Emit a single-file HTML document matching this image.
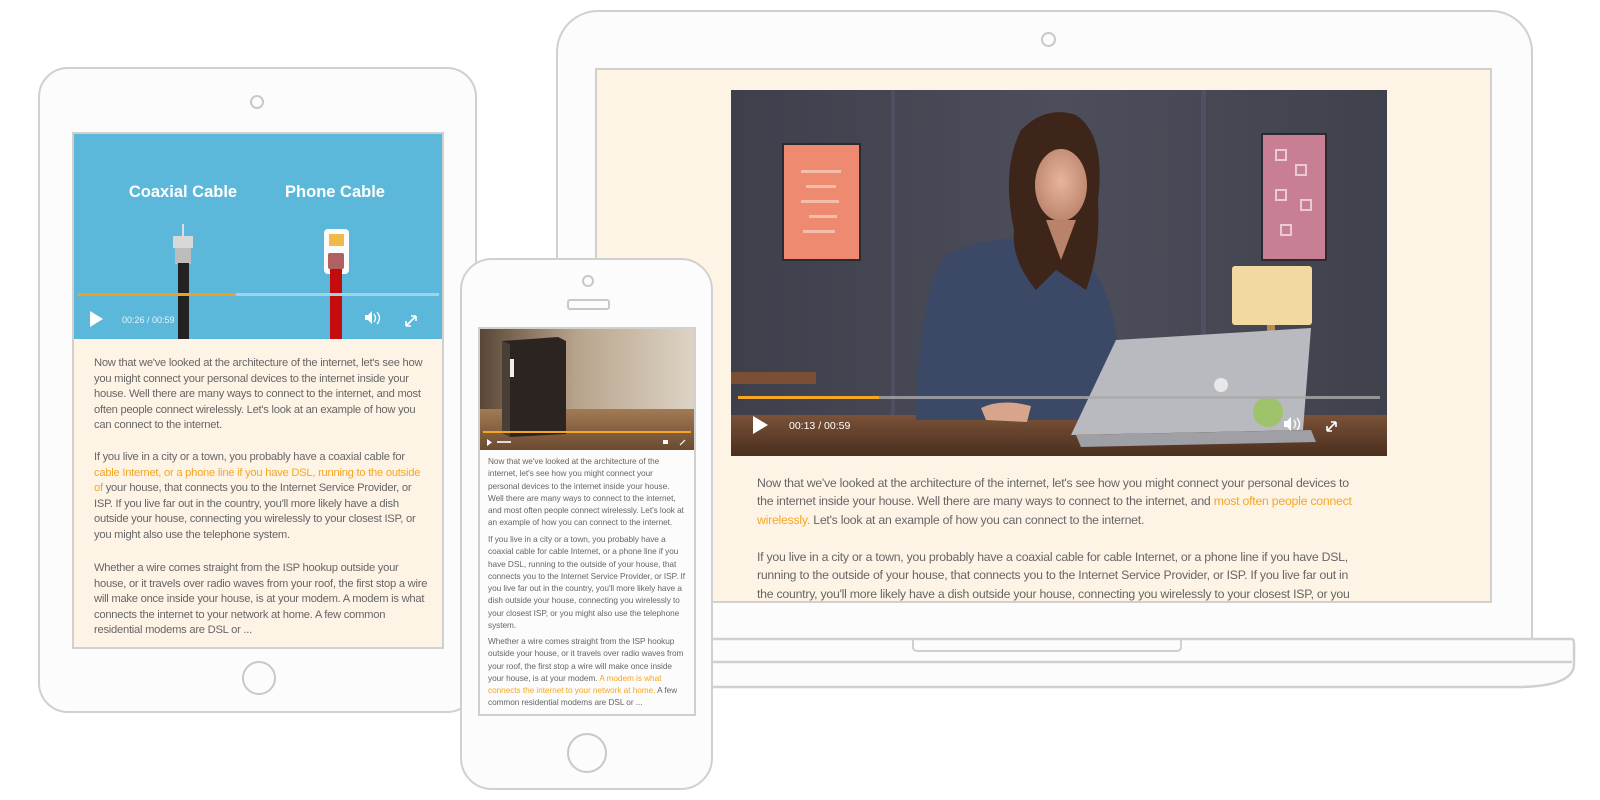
<!DOCTYPE html>
<html><head><meta charset="utf-8"><style>
*{margin:0;padding:0;box-sizing:border-box}
body{width:1600px;height:800px;background:#fff;position:relative;overflow:hidden;font-family:"Liberation Sans",Arial,sans-serif}
.a{position:absolute}
.t{position:absolute;white-space:nowrap;color:#666}
.o{color:#f5a623}
</style></head><body>

<!-- LAPTOP -->
<div class="a" style="left:556px;top:10px;width:977px;height:640px;border:2px solid #d0d0d0;border-bottom:none;border-radius:42px 42px 0 0;background:#fcfcfc"></div>
<div class="a" style="left:1041px;top:32px;width:15px;height:15px;border:2px solid #c8c8c8;border-radius:50%"></div>
<div class="a" style="left:595px;top:68px;width:897px;height:535px;background:#fef4e6;border:2px solid #d2d0cc"></div>
<svg class="a" style="left:700px;top:636px" width="900" height="56">
<path d="M2 3 H872 Q874 3 874 8 V28 Q874 50 820 51 H2 Z" fill="#fcfcfc" stroke="#d0d0d0" stroke-width="2.5"/>
<line x1="2" y1="26" x2="872" y2="26" stroke="#d0d0d0" stroke-width="2.5"/>
<path d="M213 3 V11 Q213 15 218 15 H476 Q481 15 481 11 V3" fill="none" stroke="#d0d0d0" stroke-width="2"/>
</svg>
<svg class="a" style="left:731px;top:90px" width="656" height="366" viewBox="0 0 656 366">
<defs>
<linearGradient id="bg" x1="0" x2="1"><stop offset="0" stop-color="#3d3f4b"/><stop offset=".5" stop-color="#4c4e5b"/><stop offset="1" stop-color="#3f414c"/></linearGradient>
<linearGradient id="desk" x1="0" y1="0" x2="0" y2="1"><stop offset="0" stop-color="#7a5238"/><stop offset="1" stop-color="#4a2e1e"/></linearGradient>
<radialGradient id="face" cx=".5" cy=".45" r=".6"><stop offset="0" stop-color="#e7b59c"/><stop offset="1" stop-color="#b9826a"/></radialGradient>
</defs>
<rect width="656" height="366" fill="url(#bg)"/>
<rect x="160" y="0" width="4" height="366" fill="#55576a" opacity=".6"/>
<rect x="470" y="0" width="5" height="366" fill="#55576a" opacity=".6"/>
<rect x="51" y="53" width="79" height="118" fill="#2a2a30"/>
<rect x="53" y="55" width="75" height="114" fill="#ee8a70"/>
<rect x="530" y="43" width="66" height="128" fill="#2a2a30"/>
<rect x="532" y="45" width="62" height="124" fill="#c97f93"/>
<g fill="none" stroke="#f3dde3" stroke-width="2" opacity=".8"><rect x="545" y="60" width="10" height="10"/><rect x="565" y="75" width="10" height="10"/><rect x="545" y="100" width="10" height="10"/><rect x="570" y="110" width="10" height="10"/><rect x="550" y="135" width="10" height="10"/></g>
<g fill="#f7d3c5" opacity=".7"><rect x="70" y="80" width="40" height="3"/><rect x="75" y="95" width="30" height="3"/><rect x="70" y="110" width="38" height="3"/><rect x="78" y="125" width="28" height="3"/><rect x="72" y="140" width="32" height="3"/></g>
<rect x="501" y="176" width="80" height="59" rx="3" fill="#f2d9a2"/>
<rect x="536" y="235" width="8" height="40" fill="#b98a52"/>
<rect x="0" y="282" width="85" height="12" fill="#7a4f33"/>
<rect x="0" y="325" width="656" height="41" fill="url(#desk)"/>
<path d="M185 330 Q188 200 215 165 Q255 145 300 150 Q345 152 360 178 Q395 220 385 330 Z" fill="#3b4866"/>
<path d="M283 140 Q270 80 290 40 Q315 15 345 25 Q375 45 367 110 Q370 160 355 200 L325 180 L305 200 Q280 170 283 140Z" fill="#3e2519"/>
<ellipse cx="330" cy="95" rx="26" ry="36" fill="url(#face)"/>
<path d="M315 130 L330 170 L345 130 Z" fill="#b9826a"/>
<path d="M250 318 Q270 308 300 316 L296 332 L255 330Z" fill="#d6a58c"/>
<path d="M340 345 L385 250 L580 238 L572 340 Z" fill="#b8bac0"/>
<path d="M345 345 L580 340 L585 352 L350 357 Z" fill="#9ea0a6"/>
<circle cx="490" cy="295" r="7" fill="#e8e8ea"/>
<ellipse cx="537" cy="322" rx="15" ry="15" fill="#9ec36a"/>
<rect x="7" y="306" width="642" height="3" fill="#aaa" opacity=".8"/>
<rect x="7" y="306" width="141" height="3" fill="#f5a623"/>
<path d="M22 326 L22 344 L37 335 Z" fill="#fff"/>
<text x="58" y="339" font-family="Liberation Sans" font-size="10.5" fill="#fff">00:13 / 00:59</text>
<path d="M553 331 h3 l4 -4 v14 l-4 -4 h-3z" fill="#fff"/><path d="M563 330 q3 4 0 8 M566 328 q5 6 0 12" stroke="#fff" stroke-width="1.3" fill="none"/>
<path d="M596 341 l9 -9 M605 332 h-5 M605 332 v5 M596 341 h5 M596 341 v-5" stroke="#fff" stroke-width="1.6" fill="none"/>
</svg>
<div class="t" style="left:757px;top:474px;font-size:12.3px;letter-spacing:-0.25px;line-height:18.3px">Now that we've looked at the architecture of the internet, let's see how you might connect your personal devices to<br>the internet inside your house. Well there are many ways to connect to the internet, and <span class="o">most often people connect</span><br><span class="o">wirelessly.</span> Let's look at an example of how you can connect to the internet.</div>
<div class="t" style="left:757px;top:548px;font-size:12.3px;letter-spacing:-0.25px;line-height:18.3px">If you live in a city or a town, you probably have a coaxial cable for cable Internet, or a phone line if you have DSL,<br>running to the outside of your house, that connects you to the Internet Service Provider, or ISP. If you live far out in<br>the country, you'll more likely have a dish outside your house, connecting you wirelessly to your closest ISP, or you</div>

<!-- TABLET -->
<div class="a" style="left:38px;top:67px;width:439px;height:646px;border:2px solid #d0d0d0;border-radius:30px;background:#fcfcfc"></div>
<div class="a" style="left:250px;top:95px;width:14px;height:14px;border:2px solid #c8c8c8;border-radius:50%"></div>
<div class="a" style="left:72px;top:132px;width:372px;height:517px;background:#fef4e6;border:2px solid #d2d0cc"></div>
<svg class="a" style="left:74px;top:134px" width="368" height="205">
<rect width="368" height="205" fill="#5cb8da"/>
<text x="109" y="63" text-anchor="middle" font-family="Liberation Sans" font-weight="bold" font-size="16.5" fill="#fff">Coaxial Cable</text>
<text x="261" y="63" text-anchor="middle" font-family="Liberation Sans" font-weight="bold" font-size="16.5" fill="#fff">Phone Cable</text>
<rect x="108" y="90" width="2" height="13" fill="#ddd"/>
<rect x="99" y="102" width="20" height="12" fill="#d8d8d8"/>
<rect x="101" y="114" width="16" height="16" fill="#bdbdbd"/>
<rect x="104" y="129" width="11" height="76" fill="#222"/>
<rect x="250" y="95" width="25" height="45" rx="4" fill="#fbfbfb"/>
<rect x="255" y="100" width="15" height="12" fill="#f1b84a"/>
<rect x="254" y="119" width="16" height="16" rx="2" fill="#b06060"/>
<rect x="256" y="135" width="12" height="70" fill="#c30d0d"/>
<rect x="3" y="159" width="362" height="3" fill="#9fd3e8"/>
<rect x="3" y="159" width="159" height="3" fill="#f0a020"/>
<path d="M16 177 L16 193 L29 185 Z" fill="#fff"/>
<text x="48" y="189" font-family="Liberation Sans" font-size="9" fill="#e6f3f8">00:26 / 00:59</text>
<path d="M291 181 h3 l4 -4 v13 l-4 -4 h-3z" fill="#fff"/><path d="M300 180 q3 4 0 8 M303 178 q5 6 0 12" stroke="#fff" stroke-width="1.3" fill="none"/>
<path d="M332 192 l10 -10 M342 182 h-5 M342 182 v5 M332 192 h5 M332 192 v-5" stroke="#fff" stroke-width="1.6" fill="none"/>
</svg>
<div class="t" style="left:94px;top:356px;font-size:11.2px;letter-spacing:-0.25px;line-height:15.6px">Now that we've looked at the architecture of the internet, let's see how<br>you might connect your personal devices to the internet inside your<br>house. Well there are many ways to connect to the internet, and most<br>often people connect wirelessly. Let's look at an example of how you<br>can connect to the internet.</div>
<div class="t" style="left:94px;top:450px;font-size:11.2px;letter-spacing:-0.25px;line-height:15.6px">If you live in a city or a town, you probably have a coaxial cable for<br><span class="o">cable Internet, or a phone line if you have DSL, running to the outside</span><br><span class="o">of</span> your house, that connects you to the Internet Service Provider, or<br>ISP. If you live far out in the country, you'll more likely have a dish<br>outside your house, connecting you wirelessly to your closest ISP, or<br>you might also use the telephone system.</div>
<div class="t" style="left:94px;top:561px;font-size:11.2px;letter-spacing:-0.25px;line-height:15.6px">Whether a wire comes straight from the ISP hookup outside your<br>house, or it travels over radio waves from your roof, the first stop a wire<br>will make once inside your house, is at your modem. A modem is what<br>connects the internet to your network at home. A few common<br>residential modems are DSL or ...</div>
<div class="a" style="left:242px;top:661px;width:34px;height:34px;border:2px solid #c8c8c8;border-radius:50%"></div>

<!-- PHONE -->
<div class="a" style="left:460px;top:258px;width:253px;height:532px;border:2px solid #d0d0d0;border-radius:32px;background:#fcfcfc"></div>
<div class="a" style="left:582px;top:275px;width:12px;height:12px;border:2px solid #c8c8c8;border-radius:50%"></div>
<div class="a" style="left:567px;top:299px;width:43px;height:11px;border:2px solid #c8c8c8;border-radius:3px"></div>
<div class="a" style="left:478px;top:327px;width:218px;height:389px;background:#fcfcfc;border:2px solid #d2d0cc"></div>
<svg class="a" style="left:480px;top:329px" width="214" height="121">
<defs><linearGradient id="pb" x1="0" x2="1"><stop offset="0" stop-color="#5a4636"/><stop offset=".45" stop-color="#b8a48c"/><stop offset="1" stop-color="#ddd3c5"/></linearGradient>
<linearGradient id="pt" x1="0" y1="0" x2="0" y2="1"><stop offset="0" stop-color="#a27a55"/><stop offset="1" stop-color="#6b4a30"/></linearGradient></defs>
<rect width="214" height="121" fill="url(#pb)"/>
<rect x="0" y="80" width="214" height="41" fill="url(#pt)"/>
<path d="M22 12 L78 8 L86 12 L86 105 L30 108 L22 104 Z" fill="#2b2420"/>
<path d="M22 12 L30 15 L30 108 L22 104Z" fill="#4a3f36"/>
<rect x="30" y="30" width="4" height="18" fill="#eee"/>
<rect x="3" y="102" width="208" height="2" fill="#f5a623"/>
<path d="M7 110 L7 117 L12 113.5 Z" fill="#fff"/>
<rect x="17" y="112" width="14" height="2" fill="#ddd"/>
<rect x="183" y="111" width="5" height="4" fill="#fff"/>
<path d="M200 116 l5 -5" stroke="#fff" stroke-width="1.2"/>
</svg>
<div class="t" style="left:488px;top:456px;font-size:8.25px;letter-spacing:-0.05px;line-height:12.3px">Now that we've looked at the architecture of the<br>internet, let's see how you might connect your<br>personal devices to the internet inside your house.<br>Well there are many ways to connect to the internet,<br>and most often people connect wirelessly. Let's look at<br>an example of how you can connect to the internet.</div>
<div class="t" style="left:488px;top:534px;font-size:8.25px;letter-spacing:-0.05px;line-height:12.3px">If you live in a city or a town, you probably have a<br>coaxial cable for cable Internet, or a phone line if you<br>have DSL, running to the outside of your house, that<br>connects you to the Internet Service Provider, or ISP. If<br>you live far out in the country, you'll more likely have a<br>dish outside your house, connecting you wirelessly to<br>your closest ISP, or you might also use the telephone<br>system.</div>
<div class="t" style="left:488px;top:636px;font-size:8.25px;letter-spacing:-0.05px;line-height:12.3px">Whether a wire comes straight from the ISP hookup<br>outside your house, or it travels over radio waves from<br>your roof, the first stop a wire will make once inside<br>your house, is at your modem. <span class="o">A modem is what</span><br><span class="o">connects the internet to your network at home.</span> A few<br>common residential modems are DSL or ...</div>
<div class="a" style="left:567px;top:733px;width:40px;height:40px;border:2px solid #c8c8c8;border-radius:50%"></div>
</body></html>
